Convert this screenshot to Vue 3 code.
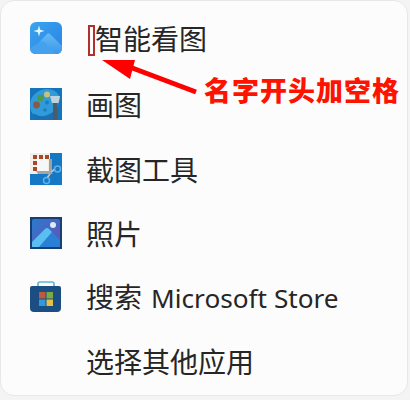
<script setup>
const items = [
  { id: 'smart', label: '智能看图', height: 66 },
  { id: 'paint', label: '画图', height: 66 },
  { id: 'snip', label: '截图工具', height: 64 },
  { id: 'photos', label: '照片', height: 64 },
  { id: 'store', label: '搜索', latin: 'Microsoft Store', height: 63 },
  { id: 'other', label: '选择其他应用', height: 65 },
]
</script>

<template>
  <div class="page">
    <div class="card">
      <div v-for="item in items" :key="item.id" class="row" :style="{ height: item.height + 'px' }">
        <span class="icon">
          <svg v-if="item.id === 'smart'" viewBox="0 0 32 32" width="32" height="32">
            <defs>
              <linearGradient id="sg" x1="0" y1="0" x2="1" y2="1">
                <stop offset="0" stop-color="#3aa4ee" />
                <stop offset="1" stop-color="#2a82e6" />
              </linearGradient>
              <linearGradient id="sm" x1="0" y1="0" x2="0" y2="1">
                <stop offset="0" stop-color="#66bbf2" />
                <stop offset="1" stop-color="#3a96eb" />
              </linearGradient>
            </defs>
            <rect width="32" height="32" rx="6" fill="url(#sg)" />
            <path d="M3 27 L17 12 Q18.5 10.5 20 12 L32 24 V26 Q32 32 26 32 H6 Q3 32 3 27Z" fill="url(#sm)" />
            <path d="M0 26 L10 20 Q12 19 14 20 L26 32 H6 Q0 32 0 26Z" fill="#45a0ee" />
            <path d="M9 3.5 L10.2 7.8 L14.5 9 L10.2 10.2 L9 14.5 L7.8 10.2 L3.5 9 L7.8 7.8Z" fill="#e8f6ff" />
          </svg>
          <svg v-else-if="item.id === 'paint'" viewBox="0 0 32 32" width="32" height="32">
            <rect width="32" height="32" fill="#1474bc" />
            <path d="M0 17 C0 8 8 1 17 1 C24 1 29 5 30 11 L26 24 C21 31 13 32 7 29 C2 27 0 22 0 17Z" fill="#2f9bd9" />
            <path d="M3 25 C10 30 18 29 25 22 L24 32 H6Z" fill="#1a6fb5" />
            <circle cx="6.5" cy="17" r="3.4" fill="#8a5a48" />
            <circle cx="10.5" cy="10" r="3.2" fill="#4d9a4b" />
            <circle cx="17" cy="6.5" r="3" fill="#c9c07a" />
            <circle cx="17" cy="14.5" r="2" fill="#1f7cc4" />
            <circle cx="15" cy="22" r="1.8" fill="#1f7cc4" />
            <path d="M20 8 H30 L28.5 15 H22Z" fill="#bcd3dd" />
            <rect x="23" y="15" width="4.5" height="17" fill="#4c5b66" />
          </svg>
          <svg v-else-if="item.id === 'snip'" viewBox="0 0 32 32" width="32" height="32">
            <rect width="32" height="32" fill="#1478c4" />
            <rect x="0" y="0" width="20" height="21" fill="#f4eee9" />
            <rect x="6" y="6" width="12" height="13" fill="#f7f7f7" />
            <g fill="#a5492b">
              <rect x="3" y="2" width="4" height="4" />
              <rect x="9" y="2" width="4" height="4" />
              <rect x="15" y="2" width="4" height="4" />
              <rect x="3" y="8" width="4" height="4" />
              <rect x="3" y="14" width="4" height="4" />
            </g>
            <path d="M19 6 L22 6 L22 19 L19 21Z" fill="#a0a0a0" />
            <path d="M6 18 H20 L23 21 H8Z" fill="#a4a4a4" />
            <path d="M21 19 L25 16 M20 21 L17 25" stroke="#c0c0c0" stroke-width="2" />
            <circle cx="27.5" cy="16" r="3" fill="none" stroke="#5fb2e8" stroke-width="1.5" />
            <circle cx="16.5" cy="27.5" r="3" fill="none" stroke="#5fb2e8" stroke-width="1.5" />
          </svg>
          <svg v-else-if="item.id === 'photos'" viewBox="0 0 32 32" width="32" height="32">
            <defs>
              <linearGradient id="pg" x1="0" y1="0" x2="1" y2="1">
                <stop offset="0" stop-color="#2a7bd0" />
                <stop offset="1" stop-color="#6a4fb0" />
              </linearGradient>
            </defs>
            <rect width="32" height="32" fill="#173f74" />
            <rect x="2" y="2" width="28" height="28" rx="2" fill="url(#pg)" />
            <circle cx="23" cy="8" r="3" fill="#dcecf8" />
            <path d="M8 30 L17 12 Q18 11 19 12 L30 23 V30Z" fill="#2a7fd6" />
            <path d="M2 25 L15 12 Q17 10 19 12 L22 15 L9 30 H2Z" fill="#59bff2" />
          </svg>
          <svg v-else-if="item.id === 'store'" viewBox="0 0 32 32" width="32" height="32">
            <path d="M8 7 V3 Q8 1 10 1 H22 Q24 1 24 3 V7" fill="none" stroke="#62b4cf" stroke-width="1.7" />
            <path d="M0 7 Q0 5 2 5 H29 Q31 5 31 7 V27 Q31 31 27 31 H4 Q0 31 0 27Z" fill="#1b4f84" />
            <rect x="9" y="11" width="6.5" height="6.5" fill="#c0583e" />
            <rect x="16.5" y="11" width="6.5" height="6.5" fill="#7cab45" />
            <rect x="9" y="18.5" width="6.5" height="6.5" fill="#2f9ade" />
            <rect x="16.5" y="18.5" width="6.5" height="6.5" fill="#e5c14a" />
          </svg>
        </span>
        <span class="label" :class="{ indented: item.id === 'smart' }">{{ item.label }}<span v-if="item.latin" class="latin">{{ item.latin }}</span></span>
      </div>
    </div>
    <div class="note">名字开头加空格</div>
    <span class="caret"></span>
    <svg class="arrow" viewBox="0 0 120 50" width="120" height="50">
      <path d="M105 36 L36 10" stroke="#fe0000" stroke-width="5" />
      <path d="M11 4 L44 4 L39 23Z" fill="#fe0000" />
    </svg>
  </div>
</template>

<style scoped>
.page {
  position: relative;
  width: 410px;
  height: 400px;
  background: #f4f4f4;
  overflow: hidden;
  font-family: "Noto Sans CJK SC", "Noto Sans", sans-serif;
}
.card {
  box-sizing: border-box;
  width: 408px;
  height: 396px;
  padding-top: 4px;
  background: #fcfcfc;
  border: 1px solid #e8e8e8;
  border-radius: 14px;
}
.row {
  display: flex;
  align-items: center;
  padding-left: 29px;
}
.icon {
  display: block;
  width: 32px;
  height: 32px;
  flex: none;
  margin-right: 24px;
}
.icon svg {
  display: block;
}
.label {
  font-size: 28px;
  line-height: 36px;
  color: #262626;
  white-space: nowrap;
}
.latin {
  font-family: "Noto Sans", sans-serif;
  font-size: 26.2px;
  margin-left: 9px;
}
.indented {
  margin-left: 9px;
}
.note {
  position: absolute;
  left: 204px;
  top: 71px;
  font-size: 27px;
  letter-spacing: 1px;
  line-height: 38px;
  font-weight: 900;
  color: #fe1200;
  white-space: nowrap;
}
.caret {
  position: absolute;
  left: 88px;
  top: 25px;
  width: 7px;
  height: 31px;
  box-sizing: border-box;
  border: 2px solid #b03030;
}
.arrow {
  position: absolute;
  left: 91px;
  top: 56px;
}
</style>
